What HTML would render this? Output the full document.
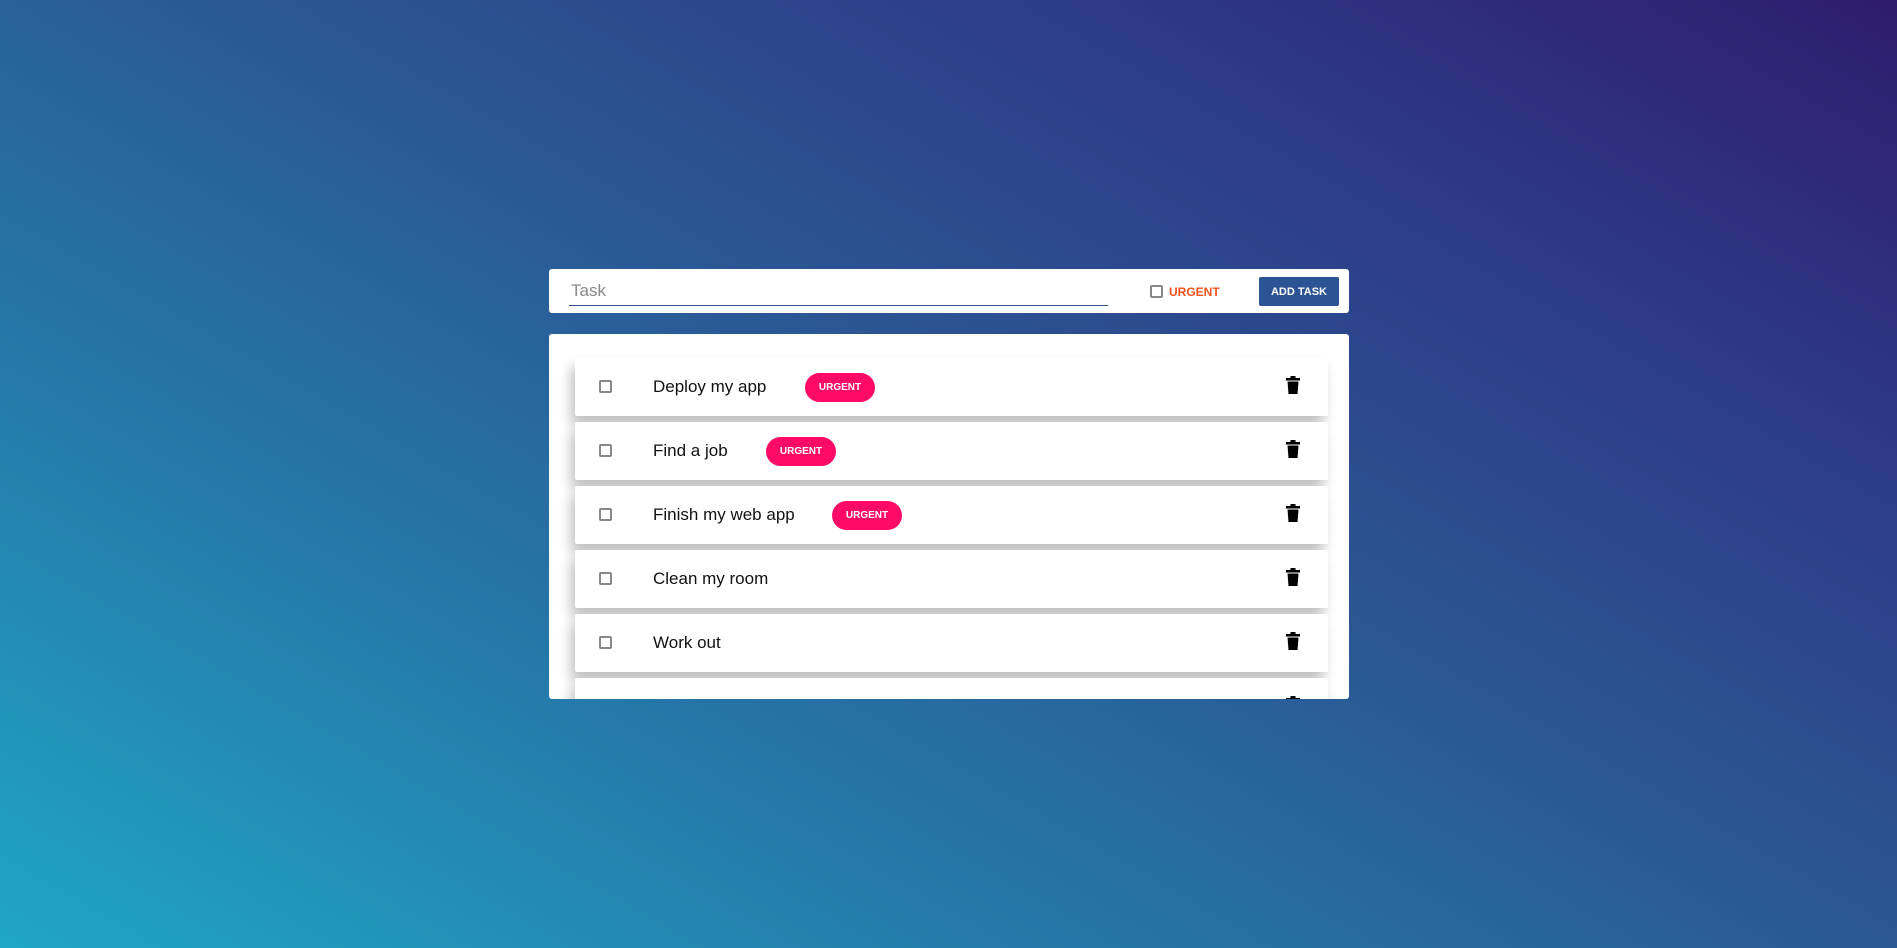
<!DOCTYPE html>
<html><head><style>
*{box-sizing:border-box;margin:0;padding:0}
body{width:1897px;height:948px;overflow:hidden;font-family:"Liberation Sans",sans-serif;
background:linear-gradient(30deg,#1fa6c6 0%,#2577a8 30%,#2b5592 55%,#2d3d88 75%,#2e1c6e 100%);position:relative}
.top{position:absolute;left:549px;top:269px;width:800px;height:44px;background:#fff;border-radius:3px}
.inp{position:absolute;left:20px;top:8px;width:539px;height:29px;border-bottom:1px solid #2c4f8a;color:#8a8a8a;font-size:17px;padding:4px 2px}
.cb{position:absolute;width:13px;height:13px;border:2px solid #888;border-radius:2px}
.urg{position:absolute;left:620px;top:16px;color:#f4511e;font-size:12px;font-weight:bold}
.btn{position:absolute;left:710px;top:8px;width:80px;height:29px;background:#2c5494;color:#fff;font-size:11px;font-weight:bold;text-align:center;line-height:30px;border-radius:2px}
.list{position:absolute;left:549px;top:334px;width:800px;height:365px;background:#fff;border-radius:3px;overflow:hidden}
.row{position:absolute;left:26px;width:753px;height:58px;background:#fff;border-radius:2px;box-shadow:-4px 9px 12px rgba(0,0,0,.25)}
.row .cb{left:24px;top:22px}
.row .t{position:absolute;left:78px;top:19px;font-size:17px;color:#111}
.badge{position:absolute;top:15px;height:29px;width:70px;border-radius:15px;background:#ff0a66;color:#fff;font-size:10px;font-weight:bold;text-align:center;line-height:30px}
.tr{position:absolute;left:711px;top:18px}
</style></head><body>
<div class="top">
<div class="inp">Task</div>
<div class="cb" style="left:601px;top:16px"></div>
<div class="urg">URGENT</div>
<div class="btn">ADD TASK</div>
</div>
<div class="list">
<div class="row" style="top:24px"><div class="cb"></div><div class="t">Deploy my app</div><div class="badge" style="left:230px">URGENT</div><svg class="tr" width="14" height="18" viewBox="0 0 14 18"><rect x="4.5" y="0" width="5" height="2" fill="#000"/><rect x="0" y="2" width="14" height="2.5" fill="#000"/><path d="M1.5 5.5h11l-1 12.5h-9z" fill="#000"/></svg></div>
<div class="row" style="top:88px"><div class="cb"></div><div class="t">Find a job</div><div class="badge" style="left:191px">URGENT</div><svg class="tr" width="14" height="18" viewBox="0 0 14 18"><rect x="4.5" y="0" width="5" height="2" fill="#000"/><rect x="0" y="2" width="14" height="2.5" fill="#000"/><path d="M1.5 5.5h11l-1 12.5h-9z" fill="#000"/></svg></div>
<div class="row" style="top:152px"><div class="cb"></div><div class="t">Finish my web app</div><div class="badge" style="left:257px">URGENT</div><svg class="tr" width="14" height="18" viewBox="0 0 14 18"><rect x="4.5" y="0" width="5" height="2" fill="#000"/><rect x="0" y="2" width="14" height="2.5" fill="#000"/><path d="M1.5 5.5h11l-1 12.5h-9z" fill="#000"/></svg></div>
<div class="row" style="top:216px"><div class="cb"></div><div class="t">Clean my room</div><svg class="tr" width="14" height="18" viewBox="0 0 14 18"><rect x="4.5" y="0" width="5" height="2" fill="#000"/><rect x="0" y="2" width="14" height="2.5" fill="#000"/><path d="M1.5 5.5h11l-1 12.5h-9z" fill="#000"/></svg></div>
<div class="row" style="top:280px"><div class="cb"></div><div class="t">Work out</div><svg class="tr" width="14" height="18" viewBox="0 0 14 18"><rect x="4.5" y="0" width="5" height="2" fill="#000"/><rect x="0" y="2" width="14" height="2.5" fill="#000"/><path d="M1.5 5.5h11l-1 12.5h-9z" fill="#000"/></svg></div>
<div class="row" style="top:344px"><div class="cb"></div><svg class="tr" width="14" height="18" viewBox="0 0 14 18"><rect x="4.5" y="0" width="5" height="2" fill="#000"/><rect x="0" y="2" width="14" height="2.5" fill="#000"/><path d="M1.5 5.5h11l-1 12.5h-9z" fill="#000"/></svg></div>
</div>
</body></html>
